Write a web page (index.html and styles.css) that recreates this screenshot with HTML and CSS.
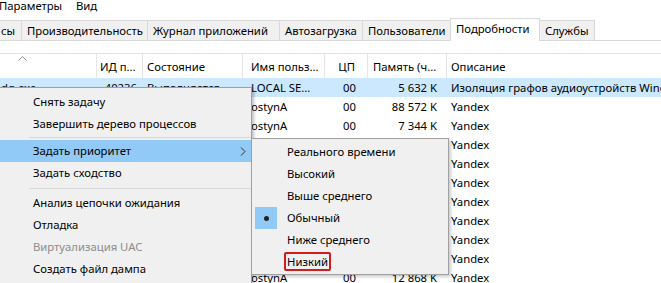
FILE: index.html
```html
<!DOCTYPE html>
<html lang="ru">
<head>
<meta charset="UTF-8">
<title>Диспетчер задач</title>
<link rel="stylesheet" href="styles.css">
</head>
<body>

<div class="menubar">
  <span class="menu-item first">Параметры</span>
  <span class="menu-item">Вид</span>
</div>

<div class="tabs">
  <div class="tab t-proc">сы</div>
  <div class="tab t-perf">Производительность</div>
  <div class="tab t-log">Журнал приложений</div>
  <div class="tab t-start">Автозагрузка</div>
  <div class="tab t-users">Пользователи</div>
  <div class="tab t-details active">Подробности</div>
  <div class="tab t-serv">Службы</div>
  <div class="tab-rest"></div>
</div>

<div class="table">
  <div class="head">
    <div class="cell c-name">
      <svg class="sort" width="9" height="5" viewBox="0 0 9 5"><path d="M0.5 4.5 L4.5 0.5 L8.5 4.5" fill="none" stroke="#8a8a8a" stroke-width="1"/></svg>
    </div>
    <div class="cell c-pid">ИД п...</div>
    <div class="cell c-state">Состояние</div>
    <div class="cell c-user">Имя польз...</div>
    <div class="cell c-cpu">ЦП</div>
    <div class="cell c-mem">Память (ч...</div>
    <div class="cell c-desc">Описание</div>
  </div>

  <div class="row selected">
    <div class="cell c-name"><span class="name-shift">audiodg.exe</span></div>
    <div class="cell c-pid">40236</div>
    <div class="cell c-state">Выполняется</div>
    <div class="cell c-user">LOCAL SE...</div>
    <div class="cell c-cpu">00</div>
    <div class="cell c-mem">5 632 K</div>
    <div class="cell c-desc">Изоляция графов аудиоустройств Windows</div>
  </div>
  <div class="row">
    <div class="cell c-name">browser.exe</div>
    <div class="cell c-pid">11460</div>
    <div class="cell c-state">Выполняется</div>
    <div class="cell c-user">ostynA</div>
    <div class="cell c-cpu">00</div>
    <div class="cell c-mem">88 572 K</div>
    <div class="cell c-desc">Yandex</div>
  </div>
  <div class="row">
    <div class="cell c-name">browser.exe</div>
    <div class="cell c-pid">11512</div>
    <div class="cell c-state">Выполняется</div>
    <div class="cell c-user">ostynA</div>
    <div class="cell c-cpu">00</div>
    <div class="cell c-mem">7 344 K</div>
    <div class="cell c-desc">Yandex</div>
  </div>
  <div class="row">
    <div class="cell c-name">browser.exe</div>
    <div class="cell c-pid">11620</div>
    <div class="cell c-state">Выполняется</div>
    <div class="cell c-user">ostynA</div>
    <div class="cell c-cpu">00</div>
    <div class="cell c-mem">21 904 K</div>
    <div class="cell c-desc">Yandex</div>
  </div>
  <div class="row">
    <div class="cell c-name">browser.exe</div>
    <div class="cell c-pid">11784</div>
    <div class="cell c-state">Выполняется</div>
    <div class="cell c-user">ostynA</div>
    <div class="cell c-cpu">00</div>
    <div class="cell c-mem">3 116 K</div>
    <div class="cell c-desc">Yandex</div>
  </div>
  <div class="row">
    <div class="cell c-name">browser.exe</div>
    <div class="cell c-pid">12032</div>
    <div class="cell c-state">Выполняется</div>
    <div class="cell c-user">ostynA</div>
    <div class="cell c-cpu">00</div>
    <div class="cell c-mem">45 228 K</div>
    <div class="cell c-desc">Yandex</div>
  </div>
  <div class="row">
    <div class="cell c-name">browser.exe</div>
    <div class="cell c-pid">12176</div>
    <div class="cell c-state">Выполняется</div>
    <div class="cell c-user">ostynA</div>
    <div class="cell c-cpu">00</div>
    <div class="cell c-mem">9 640 K</div>
    <div class="cell c-desc">Yandex</div>
  </div>
  <div class="row">
    <div class="cell c-name">browser.exe</div>
    <div class="cell c-pid">12388</div>
    <div class="cell c-state">Выполняется</div>
    <div class="cell c-user">ostynA</div>
    <div class="cell c-cpu">00</div>
    <div class="cell c-mem">16 012 K</div>
    <div class="cell c-desc">Yandex</div>
  </div>
  <div class="row">
    <div class="cell c-name">browser.exe</div>
    <div class="cell c-pid">12540</div>
    <div class="cell c-state">Выполняется</div>
    <div class="cell c-user">ostynA</div>
    <div class="cell c-cpu">00</div>
    <div class="cell c-mem">5 872 K</div>
    <div class="cell c-desc">Yandex</div>
  </div>
  <div class="row">
    <div class="cell c-name">browser.exe</div>
    <div class="cell c-pid">12696</div>
    <div class="cell c-state">Выполняется</div>
    <div class="cell c-user">ostynA</div>
    <div class="cell c-cpu">00</div>
    <div class="cell c-mem">30 448 K</div>
    <div class="cell c-desc">Yandex</div>
  </div>
  <div class="row">
    <div class="cell c-name">browser.exe</div>
    <div class="cell c-pid">12804</div>
    <div class="cell c-state">Выполняется</div>
    <div class="cell c-user">ostynA</div>
    <div class="cell c-cpu">00</div>
    <div class="cell c-mem">12 868 K</div>
    <div class="cell c-desc">Yandex</div>
  </div>
</div>

<!-- context menu -->
<div class="ctx">
  <div class="ctx-item">Снять задачу</div>
  <div class="ctx-item">Завершить дерево процессов</div>
  <div class="ctx-sep"></div>
  <div class="ctx-item hover">Задать приоритет
    <svg class="arrow" width="6" height="9" viewBox="0 0 6 9"><path d="M1 0.5 L5 4.5 L1 8.5" fill="none" stroke="#333" stroke-width="1"/></svg>
  </div>
  <div class="ctx-item">Задать сходство</div>
  <div class="ctx-sep wide"></div>
  <div class="ctx-item">Анализ цепочки ожидания</div>
  <div class="ctx-item">Отладка</div>
  <div class="ctx-item disabled">Виртуализация UAC</div>
  <div class="ctx-item">Создать файл дампа</div>
</div>

<!-- priority submenu -->
<div class="submenu">
  <div class="sub-item">Реального времени</div>
  <div class="sub-item">Высокий</div>
  <div class="sub-item">Выше среднего</div>
  <div class="sub-item checked"><span class="check"><span class="dot"></span></span>Обычный</div>
  <div class="sub-item">Ниже среднего</div>
  <div class="sub-item"><span class="mark">Низкий</span></div>
</div>

</body>
</html>
```

FILE: styles.css
```css
body {
  margin: 0;
  width: 661px;
  height: 283px;
  overflow: hidden;
  position: relative;
  background-color: #fff;
  font-family: "Noto Sans", "Open Sans", sans-serif;
  font-size: 11.3px;
  color: #000;
}

/* top menu */
.menubar {
  height: 14px;
  display: flex;
  line-height: 12px;
  white-space: nowrap;
}
.menu-item.first {
  width: 77px;
  margin-left: -1px;
}

/* tabs */
.tabs {
  margin-top: 4px;
  height: 23px;
  display: flex;
  align-items: flex-end;
}
.tab {
  height: 21px;
  line-height: 19px;
  padding-left: 5px;
  margin-right: -1px;
  box-sizing: border-box;
  background-color: #f0f0f0;
  border: 1px solid #d9d9d9;
  white-space: nowrap;
  overflow: hidden;
  flex-shrink: 0;
}
.t-proc { width: 22px; padding-left: 1px; border-left: none; }
.t-perf { width: 127px; }
.t-log { width: 133px; }
.t-start { width: 84px; }
.t-users { width: 89px; }
.t-details { width: 90px; }
.t-serv { width: 56px; }
.tab.active {
  position: relative;
  z-index: 1;
  height: 23px;
  padding-bottom: 3px;
  background-color: #fff;
  border-bottom: none;
}
.tab-rest {
  flex: 1;
  height: 22px;
  border-bottom: 1px solid #d9d9d9;
}

/* table */
.table {
  margin-top: 12px;
}
.head, .row {
  display: flex;
  white-space: nowrap;
}
.head {
  height: 25px;
  border-top: 1px solid #e3e3e3;
  box-sizing: border-box;
}
.head .cell {
  padding-top: 5px;
  line-height: 16px;
  border-right: 1px solid #e5e5e5;
  position: relative;
}
.row {
  height: 19px;
  line-height: 19px;
}
.row.selected {
  background-color: #cce8ff;
}
.cell {
  box-sizing: border-box;
  overflow: hidden;
  flex-shrink: 0;
}
.c-name { width: 97px; }
.c-pid { width: 46px; padding: 0 6px 0 3px; }
.row .c-pid { text-align: right; }
.c-state { width: 100px; padding-left: 4px; }
.c-user { width: 82px; padding-left: 8px; }
.c-cpu { width: 43px; text-align: right; padding-right: 12px; }
.c-mem { width: 79px; padding-left: 5px; }
.row .c-mem { text-align: right; padding-right: 10px; }
.c-desc { flex: 1; padding-left: 4px; border-right: none !important; }

.name-shift {
  margin-left: -29px;
}
.sort {
  position: absolute;
  left: 18px;
  top: 2px;
}

/* context menu */
.ctx {
  position: absolute;
  left: -2px;
  top: 87px;
  width: 254px;
  height: 200px;
  padding-top: 3px;
  box-sizing: border-box;
  background-color: #f0f0f0;
  border: 1px solid #a0a0a0;
  box-shadow: 2px 2px 3px rgba(0, 0, 0, 0.25);
}
.ctx-item {
  height: 22px;
  line-height: 22px;
  padding-left: 34px;
  position: relative;
}
.ctx-item.hover {
  background-color: #91c9f7;
}
.ctx-item.disabled {
  color: #8d8d8d;
}
.ctx-sep {
  height: 1px;
  margin: 2px 0 2px 30px;
  background-color: #d7d7d7;
}
.ctx-sep.wide {
  margin: 4px 0 3px 30px;
}
.arrow {
  position: absolute;
  right: 5px;
  top: 7px;
}

/* submenu */
.submenu {
  position: absolute;
  left: 251px;
  top: 138px;
  width: 198px;
  padding: 2px 2px 1px;
  box-sizing: border-box;
  background-color: #f0f0f0;
  border: 1px solid #a0a0a0;
  box-shadow: 2px 2px 3px rgba(0, 0, 0, 0.2);
}
.sub-item {
  height: 22px;
  line-height: 22px;
  padding-left: 33px;
  position: relative;
}
.check {
  position: absolute;
  left: 1px;
  top: 0;
  width: 22px;
  height: 22px;
  background-color: #91c9f7;
}
.dot {
  position: absolute;
  left: 9px;
  top: 9px;
  width: 5px;
  height: 5px;
  border-radius: 50%;
  background-color: #222;
}
.mark {
  border: 2px solid #d41b1b;
  border-radius: 2px;
  padding: 0 1px;
  margin-left: -3px;
}
```
